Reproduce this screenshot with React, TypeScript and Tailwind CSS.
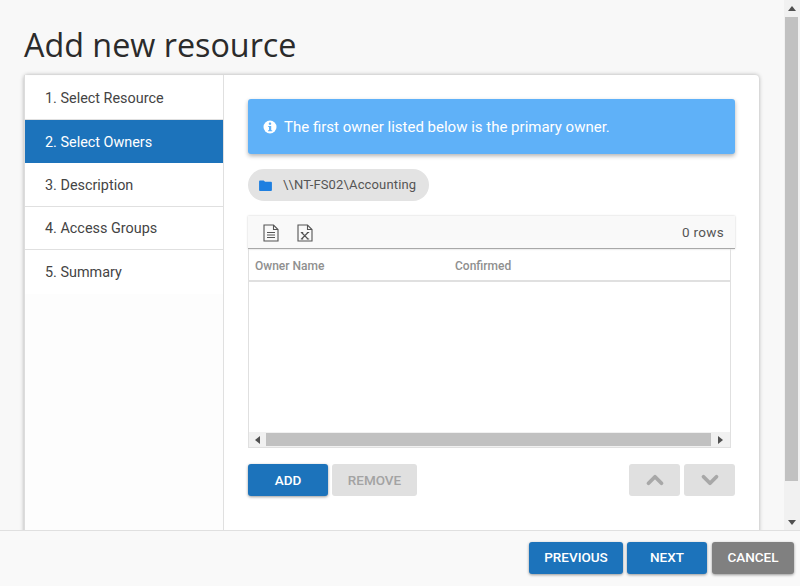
import React from 'react';
import { ChevronUp, ChevronDown } from 'lucide-react';

const steps = ['1. Select Resource', '2. Select Owners', '3. Description', '4. Access Groups', '5. Summary'];

const Caret = ({ dir }: { dir: 'up' | 'down' | 'left' | 'right' }) => {
  const points = {
    up: '4,1 8,6 0,6',
    down: '0,1 8,1 4,6',
    left: '6,0 6,8 1,4',
    right: '1,0 1,8 6,4',
  }[dir];
  return (
    <svg width="8" height="8" viewBox="0 0 8 8" className="fill-[#505050]">
      <polygon points={points} />
    </svg>
  );
};

const DocIcon = ({ excel }: { excel?: boolean }) => (
  <svg width="16" height="18" viewBox="0 0 16 18" fill="none" stroke="#555" strokeWidth="1.1">
    <path d="M1 1h9.5L15 5.5V17H1z" />
    <path d="M10.5 1v4.5H15" />
    {excel ? (
      <path d="M4.5 8.5l6.5 6.5M11 8.5L4.5 15M3.8 8.5h2.4M9.8 8.5h2.4M3.8 15h2.4M9.8 15h2.4" strokeWidth="1.2" />
    ) : (
      <path d="M4 8.5h8M4 11h8M4 13.5h8" />
    )}
  </svg>
);

export default function App() {
  return (
    <div className="w-[800px] h-[586px] flex flex-col overflow-hidden bg-[#f8f8f8] font-['Roboto',sans-serif]">
      <div className="h-[530px] flex shrink-0 overflow-hidden">
        <div className="w-[784px] pl-6 pr-[25px] overflow-hidden">
          <h1 className="h-[75px] pt-[22px] text-[32.3px] leading-[45px] text-[#2b2b2b] font-['Open_Sans',sans-serif]">
            Add new resource
          </h1>
          <div className="h-[470px] flex bg-white rounded-sm shadow-[0_0_4px_rgba(0,0,0,0.3)]">
            {/* Steps */}
            <div className="w-[200px] shrink-0 border-l border-l-[#dcdcdc] border-r border-r-[#e0e0e0] bg-[#fdfdfd] pt-px">
              {steps.map((step, i) => (
                <div
                  key={step}
                  className={`h-[43.5px] pl-5 pt-[3px] flex items-center text-[14.4px] ${
                    i === 1
                      ? 'bg-[#1c73bb] text-white'
                      : i === 4
                      ? 'text-[#444] bg-white'
                      : 'text-[#444] bg-white border-b border-[#e0e0e0]'
                  }`}
                >
                  {step}
                </div>
              ))}
            </div>

            {/* Owners */}
            <div className="flex-1 pl-6 pr-6 pt-6">
              <div className="h-[55px] flex items-center gap-[7px] pl-[15px] pt-px bg-[#5fb1f8] rounded-[3px] shadow-[0_2px_4px_rgba(0,0,0,0.3)] text-white text-[15px]">
                <svg width="14" height="14" viewBox="0 0 14 14">
                  <circle cx="7" cy="7" r="6.5" fill="#fff" />
                  <rect x="5.9" y="2.6" width="2.2" height="2.2" rx="0.6" fill="#5fb1f8" />
                  <path d="M5.2 6h3v4.2h1v1.1H5v-1.1h1V7.1h-.8z" fill="#5fb1f8" />
                </svg>
                <span>The first owner listed below is the primary owner.</span>
              </div>

              <div className="mt-[15px] h-8 w-[181px] flex items-center gap-[11px] pl-[11px] rounded-2xl bg-[#e3e3e3] text-[#555] text-[13px] tracking-[0.15px]">
                <svg width="13" height="11" viewBox="0 0 14 12" className="fill-[#1e7fe0]">
                  <path d="M1 0.5h4l1.5 1.5H13a1 1 0 0 1 1 1V11a1 1 0 0 1-1 1H1a1 1 0 0 1-1-1V1.5a1 1 0 0 1 1-1z" />
                </svg>
                <span>\\NT-FS02\Accounting</span>
              </div>

              {/* Grid */}
              <div className="mt-[15px]">
                <div className="h-[33px] flex items-center justify-between pl-[15px] pr-[11px] pt-[2px] bg-[#f9f9f9] border-b border-[#a8a8a8] shadow-[0_0_2px_rgba(0,0,0,0.2)]">
                  <div className="flex items-center gap-[18px]">
                    <DocIcon />
                    <DocIcon excel />
                  </div>
                  <span className="pb-[2px] text-[13.5px] tracking-[0.3px] text-[#555]">0 rows</span>
                </div>
                <div className="w-[483px] h-[199px] flex flex-col border-x border-b border-[#e0e0e0]">
                  <div className="h-[33px] flex items-center pl-[6px] pt-[2px] border-b-2 border-[#e0e0e0] text-[12px] font-medium text-[#8f8f8f]">
                    <span className="w-[200px]">Owner Name</span>
                    <span>Confirmed</span>
                  </div>
                  <div className="flex-1" />
                  <div className="h-[15px] flex items-center bg-[#f1f1f1]">
                    <div className="w-[17px] flex justify-center"><Caret dir="left" /></div>
                    <div className="flex-1 h-[13px] bg-[#c1c1c1]" />
                    <div className="w-[19px] flex justify-center"><Caret dir="right" /></div>
                  </div>
                </div>
              </div>

              {/* Actions */}
              <div className="mt-[16px] flex text-[13.5px]">
                <button className="w-20 h-8 rounded-[3px] bg-[#1c73bb] text-white font-medium shadow-[0_1px_3px_rgba(0,0,0,0.4)]">
                  ADD
                </button>
                <button className="ml-1 w-[85px] h-8 rounded-[3px] bg-[#e0e0e0] text-[#a3a3a3] font-medium">
                  REMOVE
                </button>
                <button className="ml-auto w-[51px] h-8 rounded-[3px] bg-[#e0e0e0] flex items-center justify-center">
                  <ChevronUp size={26} strokeWidth={3.5} color="#a8a8a8" />
                </button>
                <button className="ml-1 w-[51px] h-8 rounded-[3px] bg-[#e0e0e0] flex items-center justify-center">
                  <ChevronDown size={26} strokeWidth={3.5} color="#a8a8a8" />
                </button>
              </div>
            </div>
          </div>
        </div>

        {/* Page scrollbar */}
        <div className="w-4 flex flex-col items-start pl-px bg-[#f1f1f1]">
          <div className="w-[13px] h-[17px] flex items-center justify-center"><Caret dir="up" /></div>
          <div className="w-[13px] h-[464px] bg-[#c1c1c1]" />
          <div className="w-[13px] flex-1 flex items-end justify-center pb-[3px]"><Caret dir="down" /></div>
        </div>
      </div>

      <div className="flex-1 flex items-start justify-end pt-[11px] pr-[6px] bg-[#f9f9f9] border-t border-[#e0e0e0] text-[13.5px] font-medium text-white">
        <button className="w-[94px] h-8 pb-px rounded-[3px] bg-[#1c73bb] shadow-[0_1px_3px_rgba(0,0,0,0.4)]">PREVIOUS</button>
        <button className="ml-1 w-20 h-8 pb-px rounded-[3px] bg-[#1c73bb] shadow-[0_1px_3px_rgba(0,0,0,0.4)]">NEXT</button>
        <button className="ml-[5px] w-[82px] h-8 pb-px rounded-[3px] bg-[#808080] shadow-[0_1px_3px_rgba(0,0,0,0.4)]">CANCEL</button>
      </div>
    </div>
  );
}
